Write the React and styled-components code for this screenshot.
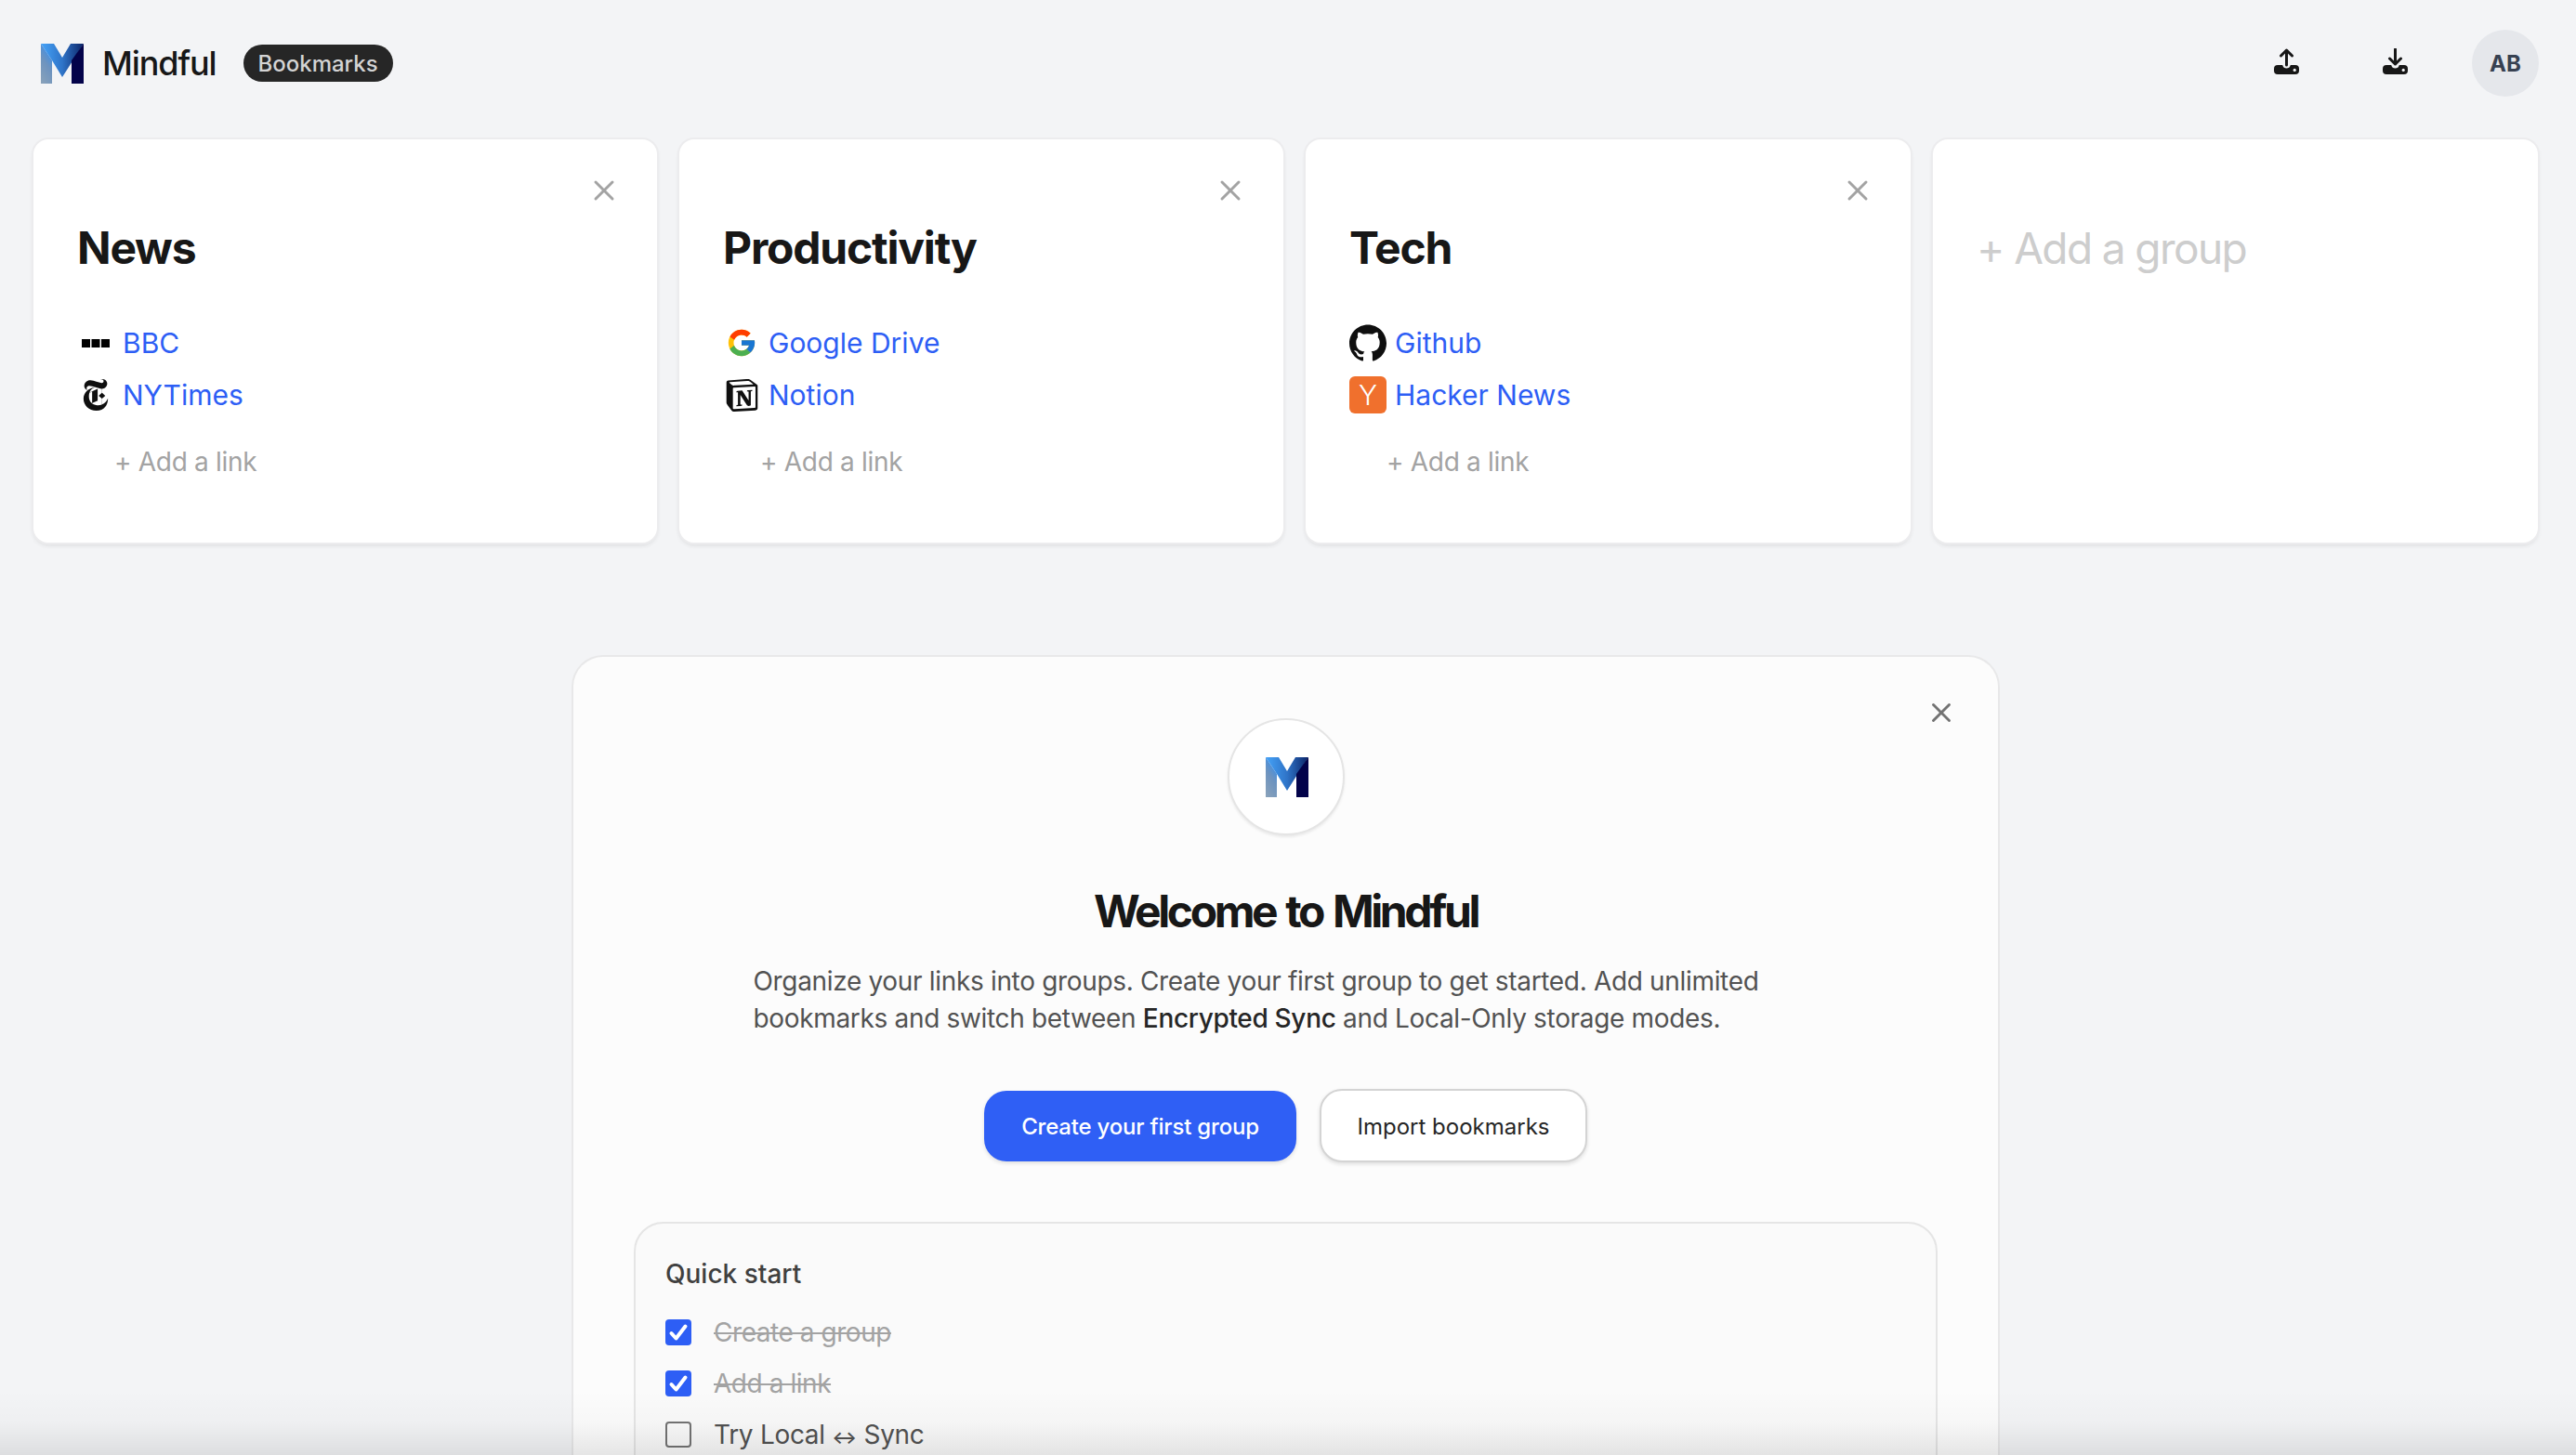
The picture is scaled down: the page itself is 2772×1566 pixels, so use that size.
import React from "react";
import styled, { createGlobalStyle } from "styled-components";
import { SiNewyorktimes, SiNotion, SiGithub } from "react-icons/si";
import { FcGoogle } from "react-icons/fc";
import { X } from "lucide-react";

const GlobalStyle = createGlobalStyle`
  html, body {
    margin: 0;
    height: 100%;
    overflow: hidden;
    background: #f3f4f6;
    font-family: Inter, "Liberation Sans", sans-serif;
  }
  * { box-sizing: border-box; }
`;

const Page = styled.div`
  position: relative;
  height: 1566px;
  overflow: hidden;
`;

const Header = styled.header`
  height: 150px;
  padding: 32px 40px 46px 44px;
  display: flex;
  align-items: center;
`;

const Brand = styled.div`
  display: flex;
  align-items: center;
  font-size: 36px;
  font-weight: 500;
  color: #171717;
  letter-spacing: -1.1px;
`;

const BrandName = styled.span`
  margin-left: 20px;
`;

const Badge = styled.span`
  margin-left: 29px;
  height: 40px;
  width: 161px;
  border-radius: 20px;
  background: #262626;
  color: #d4d4d4;
  font-size: 24px;
  font-weight: 500;
  letter-spacing: 0;
  display: flex;
  align-items: center;
  justify-content: center;
`;

const Actions = styled.div`
  margin-left: auto;
  display: flex;
  align-items: center;
`;

const IconButton = styled.button`
  width: 40px;
  height: 44px;
  margin: 0 ${(p) => p.$gap}px 4px 0;
  padding: 0;
  border: 0;
  background: none;
  display: flex;
  align-items: center;
  justify-content: center;
`;

const Avatar = styled.div`
  width: 72px;
  height: 72px;
  border-radius: 50%;
  background: #e5e7eb;
  color: #374151;
  font-size: 24px;
  font-weight: 700;
  display: flex;
  align-items: center;
  justify-content: center;
`;

const Board = styled.section`
  display: grid;
  grid-template-columns: 671px 650px 651px 651px;
  gap: 24px;
  padding-left: 36px;
`;

const Card = styled.article`
  position: relative;
  height: 434px;
  padding: 92px 48px 0 47px;
  background: #fff;
  border-radius: 16px;
  box-shadow: 0 0 0 2px #ececee, 0 3px 5px rgba(0, 0, 0, 0.1);
`;

const CloseButton = styled.button`
  position: absolute;
  top: ${(p) => p.$top}px;
  right: ${(p) => p.$right}px;
  padding: 0;
  border: 0;
  background: none;
  color: ${(p) => p.$color};
  display: flex;
`;

const CardTitle = styled.h2`
  margin: 0 0 49px;
  height: 50px;
  line-height: 50px;
  font-size: ${(p) => (p.$ghost ? 46 : 48)}px;
  font-weight: ${(p) => (p.$ghost ? 400 : 700)};
  letter-spacing: ${(p) => (p.$ghost ? -1.6 : -1.2)}px;
  color: ${(p) => (p.$ghost ? "#cdcdcd" : "#171717")};
`;

const LinkRow = styled.a`
  height: 56px;
  display: flex;
  align-items: center;
  gap: 9px;
  font-size: 30px;
  color: #2d5ef5;
`;

const IconBox = styled.span`
  width: 40px;
  height: 40px;
  flex: none;
  display: flex;
  align-items: center;
  justify-content: center;
  color: #0f0f0f;
`;

const HackerIcon = styled.span`
  width: 40px;
  height: 40px;
  border-radius: 6px;
  background: #f0702d;
  color: #fff;
  font-size: 30px;
  font-weight: 300;
  display: flex;
  align-items: center;
  justify-content: center;
`;

const AddLink = styled.div`
  margin-top: 24px;
  padding-left: 40px;
  font-size: 28px;
  letter-spacing: -0.3px;
  line-height: 40px;
  color: #a3a3a3;
`;

const Welcome = styled.section`
  position: relative;
  width: 1533px;
  margin: 123px 0 0 617px;
  padding: 66px 65px 0;
  height: 900px;
  background: #fcfcfc;
  border-radius: 32px;
  box-shadow: 0 0 0 2px #e8e8e9;
`;

const LogoCircle = styled.div`
  width: 126px;
  height: 126px;
  margin: 0 auto;
  padding-left: 2px;
  border-radius: 50%;
  background: #fff;
  border: 2px solid #e5e5e5;
  box-shadow: 0 2px 3px rgba(0, 0, 0, 0.08);
  display: flex;
  align-items: center;
  justify-content: center;
`;

const WelcomeTitle = styled.h1`
  margin: 54px 0 0;
  height: 56px;
  text-align: center;
  font-size: 48px;
  line-height: 56px;
  font-weight: 700;
  letter-spacing: -3.4px;
  word-spacing: 3px;
  color: #171717;
`;

const Intro = styled.p`
  margin: 27px auto 0;
  width: 1146px;
  font-size: 28px;
  letter-spacing: -0.33px;
  line-height: 40px;
  color: #525252;
`;

const Strong = styled.strong`
  font-weight: 500;
  color: #262626;
`;

const ButtonRow = styled.div`
  margin-top: 56px;
  display: flex;
  justify-content: center;
  align-items: center;
  gap: 25px;
`;

const Button = styled.button`
  height: ${(p) => (p.$primary ? 76 : 79)}px;
  width: ${(p) => (p.$primary ? 336 : 288)}px;
  padding: 2px 0 0;
  border-radius: 24px;
  border: ${(p) => (p.$primary ? "0" : "2px solid #d4d4d4")};
  background: ${(p) => (p.$primary ? "#2f5ff5" : "#fff")};
  color: ${(p) => (p.$primary ? "#fff" : "#262626")};
  font-family: inherit;
  font-size: 24px;
  font-weight: ${(p) => (p.$primary ? 500 : 400)};
  letter-spacing: ${(p) => (p.$primary ? -0.2 : 0)}px;
  box-shadow: 0 2px 4px rgba(0, 0, 0, 0.12);
`;

const QuickStart = styled.div`
  margin-top: 64px;
  height: 400px;
  padding: 34px 32px 0;
  background: #fafafa;
  border: 2px solid #e5e5e5;
  border-radius: 32px;
`;

const QuickTitle = styled.div`
  font-size: 28px;
  line-height: 40px;
  font-weight: 500;
  color: #404040;
  margin-bottom: 15px;
`;

const CheckRow = styled.label`
  height: 55px;
  display: flex;
  align-items: center;
  gap: 24px;
  font-size: 28px;
  letter-spacing: ${(p) => (p.$done ? -0.45 : -0.3)}px;
  color: ${(p) => (p.$done ? "#a3a3a3" : "#525252")};
  text-decoration: ${(p) => (p.$done ? "line-through" : "none")};
`;

const ArrowGlyph = styled.span`
  font-size: 20px;
  font-weight: 600;
`;

const CheckBox = styled.span`
  width: 28px;
  height: 28px;
  flex: none;
  border-radius: 4px;
  background: ${(p) => (p.$checked ? "#2d5ef5" : "transparent")};
  border: ${(p) => (p.$checked ? "0" : "2px solid #737373")};
  display: flex;
  align-items: center;
  justify-content: center;
`;

const BottomFade = styled.div`
  position: absolute;
  left: 0;
  right: 0;
  bottom: 0;
  height: 70px;
  background: linear-gradient(to bottom, rgba(0, 0, 0, 0), rgba(0, 0, 0, 0.02) 50%, rgba(0, 0, 0, 0.09));
  pointer-events: none;
`;

function MindfulLogo({ width, id }) {
  return (
    <svg width={width} viewBox="0 0 46 43" style={{ display: "block" }}>
      <defs>
        <linearGradient id={`${id}-l`} x1="0" y1="1" x2="0.4" y2="0">
          <stop offset="0" stopColor="#8ba3ba" />
          <stop offset="0.6" stopColor="#6d93bf" />
          <stop offset="1" stopColor="#3f8fe6" />
        </linearGradient>
        <linearGradient id={`${id}-m`} x1="0" y1="0" x2="1" y2="0">
          <stop offset="0" stopColor="#45a3f8" />
          <stop offset="0.5" stopColor="#2f74c8" />
          <stop offset="1" stopColor="#0b2467" />
        </linearGradient>
      </defs>
      <polygon points="0,0 0,43 12,43 12,18" fill={`url(#${id}-l)`} />
      <polygon points="0,0 14,0 23,15 32,0 46,0 23,36 12,18" fill={`url(#${id}-m)`} />
      <polygon points="33,43 33,18 46,0 46,43" fill="#03034a" />
    </svg>
  );
}

function TrayIcon({ down }) {
  return (
    <svg width="27" height="28" viewBox="0 0 27 28" style={{ display: "block" }}>
      <path
        d="M4 18h5.2c.5 2.400 2.200 3.600 4.300 3.600s3.800-1.200 4.300-3.600H23a4 4 0 0 1 4 4v2a4 4 0 0 1-4 4H4a4 4 0 0 1-4-4v-2a4 4 0 0 1 4-4z"
        fill="#171717"
      />
      <circle cx="22.200" cy="23.400" r="1.600" fill="#f3f4f6" />
      {down ? (
        <path d="M13.500 1v16M7.500 11l6 6 6-6" fill="none" stroke="#171717" strokeWidth="3" strokeLinecap="round" strokeLinejoin="round" />
      ) : (
        <path d="M13.500 18V2M7.500 8l6-6 6 6" fill="none" stroke="#171717" strokeWidth="3" strokeLinecap="round" strokeLinejoin="round" />
      )}
    </svg>
  );
}

function BbcIcon() {
  return (
    <svg width="30" height="9" viewBox="0 0 30 9">
      <rect x="0" width="9" height="9" fill="#000" />
      <rect x="10.500" width="9" height="9" fill="#000" />
      <rect x="21" width="9" height="9" fill="#000" />
    </svg>
  );
}

function Check() {
  return (
    <svg width="22" height="20" viewBox="0 0 22 20">
      <path d="M3.500 11l5 5.500L18.500 3.500" fill="none" stroke="#fff" strokeWidth="4" strokeLinecap="round" strokeLinejoin="round" />
    </svg>
  );
}

const groups = [
  {
    title: "News",
    links: [
      { label: "BBC", icon: <BbcIcon /> },
      { label: "NYTimes", icon: <SiNewyorktimes size={34} /> },
    ],
  },
  {
    title: "Productivity",
    links: [
      { label: "Google Drive", icon: <FcGoogle size={34} /> },
      { label: "Notion", icon: <SiNotion size={35} /> },
    ],
  },
  {
    title: "Tech",
    links: [
      { label: "Github", icon: <SiGithub size={40} /> },
      { label: "Hacker News", icon: <HackerIcon>Y</HackerIcon> },
    ],
  },
];

export default function App() {
  return (
    <Page>
      <GlobalStyle />
      <Header>
        <Brand>
          <MindfulLogo width={46} id="brand" />
          <BrandName>Mindful</BrandName>
          <Badge>Bookmarks</Badge>
        </Brand>
        <Actions>
          <IconButton $gap={77}><TrayIcon /></IconButton>
          <IconButton $gap={63}><TrayIcon down /></IconButton>
          <Avatar>AB</Avatar>
        </Actions>
      </Header>
      <Board>
        {groups.map((g) => (
          <Card key={g.title}>
            <CloseButton $top={37} $right={39} $color="#a3a3a3"><X size={36} strokeWidth={2} /></CloseButton>
            <CardTitle>{g.title}</CardTitle>
            {g.links.map((l) => (
              <LinkRow key={l.label}>
                <IconBox>{l.icon}</IconBox>
                {l.label}
              </LinkRow>
            ))}
            <AddLink>+ Add a link</AddLink>
          </Card>
        ))}
        <Card>
          <CardTitle $ghost>+ Add a group</CardTitle>
        </Card>
      </Board>
      <Welcome>
        <CloseButton $top={43} $right={44} $color="#737373"><X size={34} strokeWidth={2} /></CloseButton>
        <LogoCircle><MindfulLogo width={46} id="welcome" /></LogoCircle>
        <WelcomeTitle>Welcome to Mindful</WelcomeTitle>
        <Intro>
          Organize your links into groups. Create your first group to get started. Add unlimited bookmarks and switch between <Strong>Encrypted Sync</Strong> and Local-Only storage modes.
        </Intro>
        <ButtonRow>
          <Button $primary>Create your first group</Button>
          <Button>Import bookmarks</Button>
        </ButtonRow>
        <QuickStart>
          <QuickTitle>Quick start</QuickTitle>
          <CheckRow $done><CheckBox $checked><Check /></CheckBox>Create a group</CheckRow>
          <CheckRow $done><CheckBox $checked><Check /></CheckBox>Add a link</CheckRow>
          <CheckRow><CheckBox /><span>Try Local <ArrowGlyph>↔</ArrowGlyph> Sync</span></CheckRow>
        </QuickStart>
      </Welcome>
      <BottomFade />
    </Page>
  );
}
